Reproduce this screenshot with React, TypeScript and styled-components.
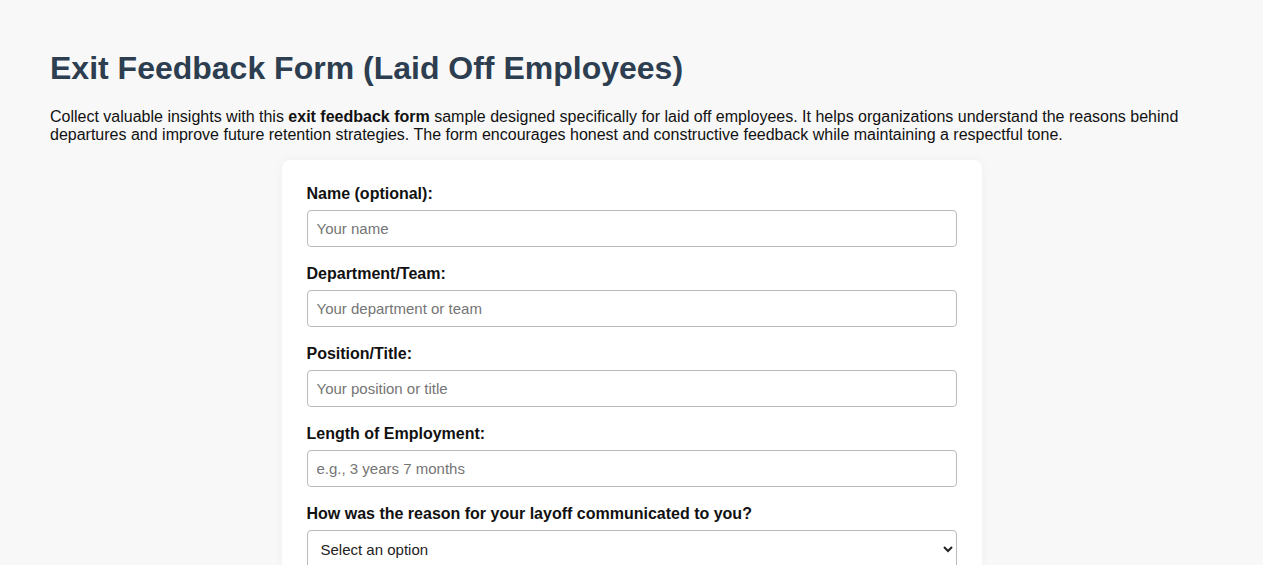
import React from 'react';
import styled, { createGlobalStyle } from 'styled-components';

const GlobalStyle = createGlobalStyle`
	body {
		margin: 0;
		background: #f8f8f8;
		font-family: 'Liberation Sans', Arial, sans-serif;
		color: #222;
	}
`;

const Page = styled.main`
	padding: 29px 50px;
`;

const Title = styled.h1`
	font-size: 32px;
	font-weight: bold;
	color: #2c3e50;
	margin: 21px 0;
`;

const Intro = styled.p`
	font-size: 16px;
	margin: 16px 0;
	color: #111;
`;

const FormCard = styled.form`
	max-width: 700px;
	margin: 0 auto;
	box-sizing: border-box;
	background: #fff;
	padding: 25px;
	border-radius: 8px;
	box-shadow: 0 0 10px rgba(0, 0, 0, 0.04);
`;

const Label = styled.label`
	display: block;
	font-weight: bold;
	font-size: 16px;
	color: #111;
	margin-bottom: 7px;
`;

const fieldCss = `
	display: block;
	width: 100%;
	box-sizing: border-box;
	font-family: 'Liberation Sans', Arial, sans-serif;
	font-size: 15px;
	padding: 9px;
	border: 1px solid #bbb;
	border-radius: 4px;
	background: #fff;
	color: #222;
	margin-bottom: 18px;
`;

const TextInput = styled.input`
	${fieldCss}
	&::placeholder {
		color: #757575;
	}
`;

const Select = styled.select`
	${fieldCss}
`;

const fields = [
	{ label: 'Name (optional):', placeholder: 'Your name' },
	{ label: 'Department/Team:', placeholder: 'Your department or team' },
	{ label: 'Position/Title:', placeholder: 'Your position or title' },
	{ label: 'Length of Employment:', placeholder: 'e.g., 3 years 7 months' },
];

export default function App() {
	return (
		<>
			<GlobalStyle />
			<Page>
				<Title>Exit Feedback Form (Laid Off Employees)</Title>
				<Intro>
					Collect valuable insights with this <strong>exit feedback form</strong> sample designed specifically for laid off employees. It helps organizations understand the reasons behind departures and improve future retention strategies. The form encourages honest and constructive feedback while maintaining a respectful tone.
				</Intro>
				<FormCard onSubmit={(e) => e.preventDefault()}>
					{fields.map((f, i) => (
						<div key={i}>
							<Label htmlFor={'f' + i}>{f.label}</Label>
							<TextInput id={'f' + i} type='text' placeholder={f.placeholder} />
						</div>
					))}
					<Label htmlFor='communicated'>How was the reason for your layoff communicated to you?</Label>
					<Select id='communicated' defaultValue=''>
						<option value=''>Select an option</option>
						<option>In person meeting</option>
						<option>Email</option>
						<option>Phone call</option>
						<option>Video call</option>
						<option>Other</option>
					</Select>
				</FormCard>
			</Page>
		</>
	);
}
